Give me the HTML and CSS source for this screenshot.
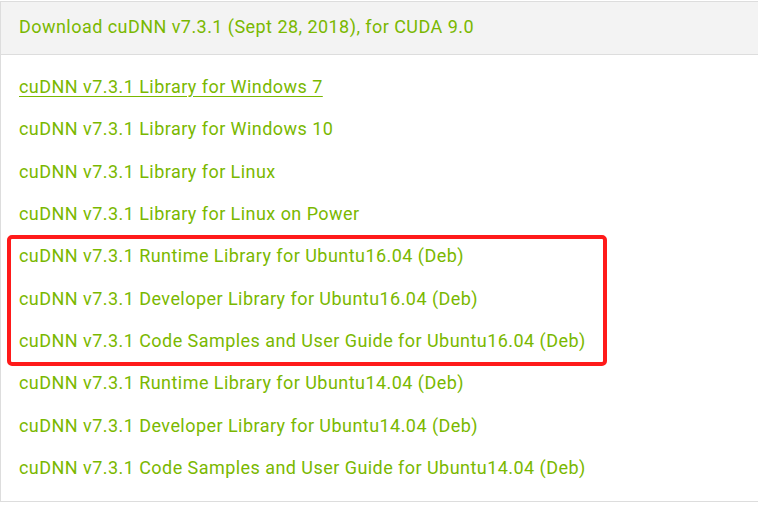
FILE: index.html
```html
<!DOCTYPE html>
<html>
<head>
<meta charset="utf-8">
<link rel="stylesheet" href="styles.css">
</head>
<body>
<div class="panel">
  <div class="panel-head">Download cuDNN v7.3.1 (Sept 28, 2018), for CUDA 9.0</div>
  <div class="panel-body">
    <div class="row"><a class="link underline" href="#">cuDNN v7.3.1 Library for Windows 7</a></div>
    <div class="row"><a class="link" href="#">cuDNN v7.3.1 Library for Windows 10</a></div>
    <div class="row"><a class="link" href="#">cuDNN v7.3.1 Library for Linux</a></div>
    <div class="row"><a class="link" href="#">cuDNN v7.3.1 Library for Linux on Power</a></div>
    <div class="group">
      <div class="row"><a class="link" href="#">cuDNN v7.3.1 Runtime Library for Ubuntu16.04 (Deb)</a></div>
      <div class="row"><a class="link" href="#">cuDNN v7.3.1 Developer Library for Ubuntu16.04 (Deb)</a></div>
      <div class="row"><a class="link" href="#">cuDNN v7.3.1 Code Samples and User Guide for Ubuntu16.04 (Deb)</a></div>
    </div>
    <div class="row"><a class="link" href="#">cuDNN v7.3.1 Runtime Library for Ubuntu14.04 (Deb)</a></div>
    <div class="row"><a class="link" href="#">cuDNN v7.3.1 Developer Library for Ubuntu14.04 (Deb)</a></div>
    <div class="row"><a class="link" href="#">cuDNN v7.3.1 Code Samples and User Guide for Ubuntu14.04 (Deb)</a></div>
  </div>
</div>
</body>
</html>
```

FILE: styles.css
```css
html, body {
  margin: 0;
  padding: 0;
  background: #ffffff;
}
body {
  font-family: Roboto, "Liberation Sans", sans-serif;
  font-size: 18px;
  letter-spacing: 0.45px;
  color: #76b900;
  overflow: hidden;
}
.panel {
  margin-top: 1px;
  width: 780px;
  height: 501px;
  border: 1px solid #dddddd;
  border-right: none;
  box-sizing: border-box;
}
.panel-head {
  height: 52px;
  background: #f3f3f3;
  border-bottom: 1px solid #dddddd;
  padding-left: 18px;
  line-height: 50px;
}
.panel-body {
  padding: 11px 0 0 18px;
  display: flex;
  flex-direction: column;
}
.group {
  position: relative;
  display: flex;
  flex-direction: column;
}
.group::after {
  content: "";
  position: absolute;
  left: -12px;
  top: 0;
  width: 600px;
  height: 131px;
  border: 4px solid #ff1a1a;
  border-radius: 5px;
  box-sizing: border-box;
}
.row {
  height: 42.33px;
  line-height: 42px;
}
.link {
  color: #7ab800;
  text-decoration: none;
}
.link.underline {
  text-decoration: underline;
  text-underline-offset: 3px;
}
.panel-head {
  color: #7ab800;
}
```
